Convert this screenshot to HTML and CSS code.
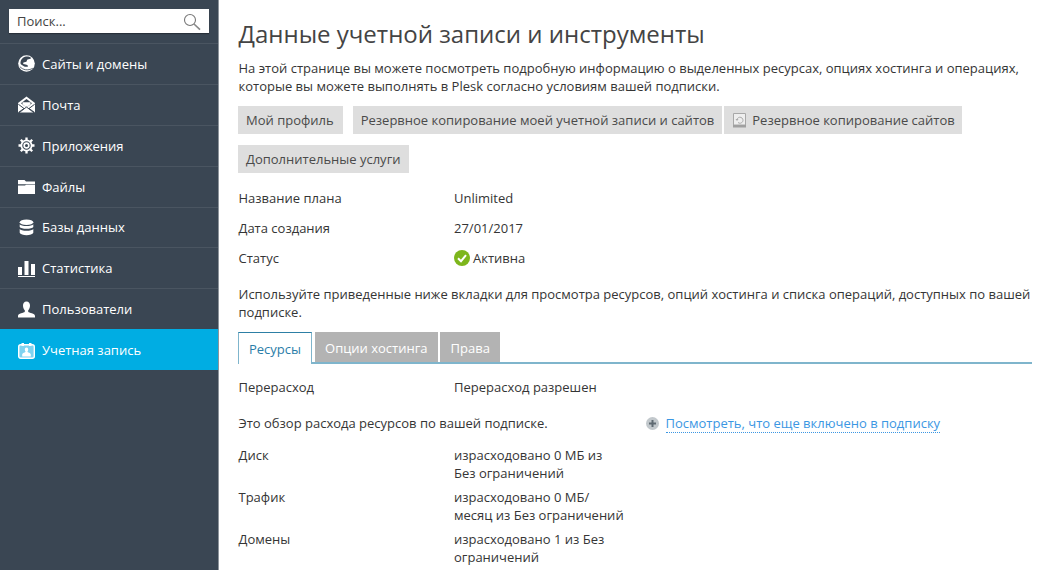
FILE: index.html
```html
<!DOCTYPE html>
<html lang="ru">
<head>
<meta charset="utf-8">
<title>Данные учетной записи и инструменты</title>
<link rel="stylesheet" href="styles.css">
</head>
<body>
<div class="app">
  <aside class="sidebar">
    <div class="search-wrap">
      <div class="search">
        <span>Поиск...</span>
        <svg class="search-icon" width="18" height="18" viewBox="0 0 18 18"><circle cx="7" cy="7" r="5.5" fill="none" stroke="#777" stroke-width="1.1"/><path d="M11 11l6 5.6" stroke="#888" stroke-width="1.6" fill="none"/></svg>
      </div>
    </div>
    <nav>
      <a class="nav-item"><svg class="nav-icon" viewBox="0 0 17 17"><circle cx="8.500" cy="8.500" r="8.300" fill="#fff"/><path d="M7 1.800c2.200-.6 4.500-.2 6.200 1.200-.9 1.300-2.600.8-3.700 1.500-.9.600-.3 1.600-1.200 2.200-1.100.7-3 .3-3.200 1.500-.2 1 1.400 1.100 2.400 1.200 1.600.1 2.700.9 2.500 2.100-.9.300-3 .5-4.200-.3C4.200 10 3.300 10 2.600 9 2 6 4 2.700 7 1.800z" fill="#3a4653"/><path d="M1.800 11.500c3 3.500 8 4.500 13 1.800" stroke="#3a4653" stroke-width=".8" fill="none"/></svg>Сайты и домены</a>
      <a class="nav-item"><svg class="nav-icon" viewBox="0 0 17 17"><path d="M0 7L8.500 .5 17 7v9.500H0z" fill="#fff"/><path d="M3 7.200L8.500 3 14 7.200 8.500 11.500z" fill="#3a4653"/><path d="M4.500 6.200h8v2l-4 3.200-4-3.200z" fill="#fff"/><path d="M.3 8.200l5.700 4.300-5.700 4M16.700 8.200L11 12.500l5.700 4M1 16.800l7.500-5.800 7.500 5.800" fill="none" stroke="#3a4653" stroke-width="1"/></svg>Почта</a>
      <a class="nav-item"><svg class="nav-icon" viewBox="0 0 17 17"><path d="M8.500 .5v16M.5 8.500h16M2.800 2.800l11.400 11.400M14.200 2.800L2.800 14.200" stroke="#fff" stroke-width="2.300"/><circle cx="8.500" cy="8.500" r="6" fill="#fff"/><circle cx="8.500" cy="8.500" r="3.700" fill="none" stroke="#3a4653" stroke-width="1.100"/><circle cx="8.500" cy="8.500" r="1.500" fill="#3a4653"/></svg>Приложения</a>
      <a class="nav-item"><svg class="nav-icon" viewBox="0 0 17 17"><path d="M0 2h6.500L8 3.500h9v2.800H0z" fill="#fff"/><path d="M0 7.500h7L8 6.800h9V16H0z" fill="#fff"/></svg>Файлы</a>
      <a class="nav-item"><svg class="nav-icon" viewBox="0 0 17 17"><ellipse cx="8.500" cy="3.300" rx="6.800" ry="2.800" fill="#fff"/><path d="M1.700 5.200c1 2.400 12.600 2.400 13.600 0V8c-1 2.400-12.600 2.400-13.600 0zM1.700 10c1 2.400 12.600 2.400 13.600 0v3.800c-1 3.200-12.600 3.200-13.600 0z" fill="#fff"/></svg>Базы данных</a>
      <a class="nav-item"><svg class="nav-icon" viewBox="0 0 17 17"><path d="M0 7h4v8H0zM6.500 1h4v14h-4zM13 4h4v11h-4z" fill="#fff"/><path d="M0 16.500h17" stroke="#fff" stroke-width="1"/></svg>Статистика</a>
      <a class="nav-item"><svg class="nav-icon" viewBox="0 0 17 17"><path d="M8.500 .5c2.300 0 3.500 1.700 3.500 4 0 2-.8 3.800-1.800 4.800v1.500c.8 1.300 6.800 1.300 6.800 4.200v1.500H0V15c0-2.900 6-2.900 6.800-4.200V9.300C5.800 8.300 5 6.500 5 4.500c0-2.300 1.200-4 3.500-4z" fill="#fff"/></svg>Пользователи</a>
      <a class="nav-item active"><svg class="nav-icon" viewBox="0 0 17 17"><rect x=".7" y="2.700" width="15.600" height="13.600" rx="2" fill="#7fd3f0" stroke="#fff" stroke-width="1.400"/><path d="M3.500 1h2.500v3H3.500zM11 1h2.500v3H11z" fill="#fff"/><path d="M8.500 5.500c1.100 0 1.700.9 1.700 2 0 .9-.3 1.600-.8 2.100 0 1 3.400 1.400 3.400 2.900v2H4.200v-2c0-1.500 3.400-1.900 3.400-2.900-.5-.5-.8-1.200-.8-2.100 0-1.100.6-2 1.700-2z" fill="#fff"/></svg>Учетная запись</a>
    </nav>
  </aside>
  <main class="content">
    <h1 class="title">Данные учетной записи и инструменты</h1>
    <p class="intro">На этой странице вы можете посмотреть подробную информацию о выделенных ресурсах, опциях хостинга и операциях, которые вы можете выполнять в Plesk согласно условиям вашей подписки.</p>
    <div class="tools">
      <a class="tool first">Мой профиль</a>
      <a class="tool">Резервное копирование моей учетной записи и сайтов</a>
      <a class="tool with-icon"><svg class="tool-icon" width="15" height="15" viewBox="0 0 15 15"><path d="M1.500.5h12V12h-12z" fill="#eee" stroke="#a8a8a8"/><path d="M1 12h13v2.500H1z" fill="#a0a0a0"/><path d="M5 6.800a3 3 0 1 1 1 2.700" fill="none" stroke="#aaa"/><path d="M3.500 6h3L5 8z" fill="#aaa"/></svg>Резервное копирование сайтов</a>
      <a class="tool">Дополнительные услуги</a>
    </div>
    <dl class="info">
      <div class="row"><dt>Название плана</dt><dd>Unlimited</dd></div>
      <div class="row"><dt>Дата создания</dt><dd>27/01/2017</dd></div>
      <div class="row"><dt>Статус</dt><dd class="status"><svg width="16" height="16" viewBox="0 0 16 16"><circle cx="8" cy="8" r="8" fill="#7db61c"/><path d="M4 8.200l3 3 5-6" fill="none" stroke="#fff" stroke-width="2"/></svg>Активна</dd></div>
    </dl>
    <p class="hint">Используйте приведенные ниже вкладки для просмотра ресурсов, опций хостинга и списка операций, доступных по вашей подписке.</p>
    <div class="tabs">
      <a class="tab active">Ресурсы</a>
      <a class="tab">Опции хостинга</a>
      <a class="tab last">Права</a>
    </div>
    <div class="row over"><div class="term">Перерасход</div><div>Перерасход разрешен</div></div>
    <div class="overview">
      <div class="overview-text">Это обзор расхода ресурсов по вашей подписке.</div>
      <a class="more"><svg width="13" height="13" viewBox="0 0 13 13"><circle cx="6.500" cy="6.500" r="6.500" fill="#c2c8cc"/><path d="M6.500 3v7M3 6.500h7" stroke="#5f6a72" stroke-width="2"/></svg><span class="more-link">Посмотреть, что еще включено в подписку</span></a>
    </div>
    <div class="res"><div class="term">Диск</div><div class="val">израсходовано 0 МБ из Без ограничений</div></div>
    <div class="res"><div class="term">Трафик</div><div class="val">израсходовано 0 МБ/<wbr>месяц из Без ограничений</div></div>
    <div class="res"><div class="term">Домены</div><div class="val">израсходовано 1 из Без ограничений</div></div>
  </main>
</div>
</body>
</html>
```
FILE: styles.css
```css
* { box-sizing: border-box; }
html, body { margin: 0; height: 100%; overflow: hidden; }
body { font: 13px/18px "Open Sans", sans-serif; color: #353535; background: #fff; }
.app { display: flex; height: 570px; overflow: hidden; }
.sidebar { width: 219px; flex: none; background: #3a4653; border-right: 1px solid #8d949b; }
.search-wrap { height: 43px; padding: 9px 9px 0; }
.search { width: 200px; height: 24px; background: #fff; display: flex; align-items: center; justify-content: space-between; padding: 0 8px; color: #444; box-shadow: 0 1px 1px rgba(0,0,0,.3); }
.search-icon { margin-top: 1px; }
.nav-item { display: flex; align-items: center; height: 40.875px; padding-left: 18px; border-top: 1px solid #4a5561; color: #fff; }
.nav-item.active { background: #00ade3; border-top-color: #00ade3; }
.nav-icon { width: 17px; height: 17px; margin-right: 7px; flex: none; }
.content { flex: 1; min-width: 0; padding: 0 10px 0 19.5px; }
.title { margin: 19px 0 0; font-size: 24px; line-height: 29px; font-weight: 400; color: #444; }
.intro { margin: 11px 0 0; }
.tools { display: flex; flex-wrap: wrap; margin: 11px 0 0 -.5px; gap: 11px 0; width: 780px; }
.tool { display: flex; align-items: center; height: 28px; padding: 0 8px; background: #dedede; color: #4a4a4a; margin-right: 2px; white-space: nowrap; }
.tool.first { padding-right: 9px; margin-right: 10px; }
.tool.with-icon { padding-right: 7px; }
.tool-icon { margin-right: 5px; }
.info { margin: 10px 0 0; }
.row { display: flex; height: 30px; align-items: center; }
.row dt { width: 215.5px; }
.row dd { margin: 0; }
.status { display: flex; align-items: center; gap: 3px; }
.hint { margin: 12px 0 0; }
.tabs { display: flex; gap: 2px; margin: 11px 0 0 -.5px; height: 32px; border-bottom: 2px solid #7fb5cc; }
.tab { height: 30px; padding: 1px 10px 0; display: flex; align-items: center; background: #b3b3b3; color: #fff; }
.tab.last { padding-left: 11px; }
.tab.active { height: 32px; margin-right: 1px; background: #fff; color: #2a7da8; border: 1px solid #7fb5cc; border-bottom: 0; border-top-color: #2d7fa5; }
.over { margin-top: 8px; height: 30px; }
.term { width: 215.5px; flex: none; }
.overview { display: flex; margin-top: 12px; height: 32px; }
.overview-text { width: 407px; }
.more { display: flex; align-items: center; height: 18px; gap: 7px; color: #3b97e3; }
.more-link { border-bottom: 1px dotted #3b97e3; }
.res { display: flex; height: 42px; }
.val { width: 171px; }
```
